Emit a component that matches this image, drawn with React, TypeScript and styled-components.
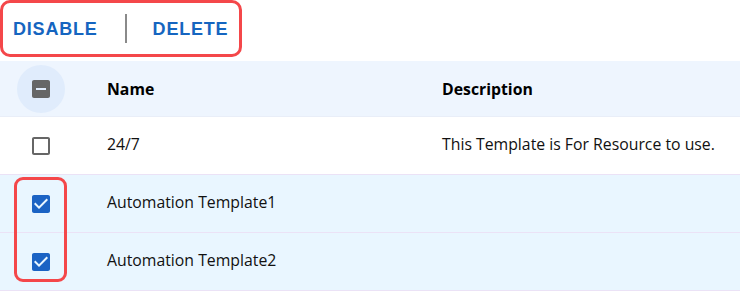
import React from "react";
import styled, { createGlobalStyle } from "styled-components";

const Global = createGlobalStyle`
  html, body { margin: 0; padding: 0; background: #ffffff; }
  body { font-family: "Open Sans", "Noto Sans", sans-serif; color: #111; }
`;

const Page = styled.div`
  width: 740px;
  display: flex;
  flex-direction: column;
  gap: 4px;
`;

const Toolbar = styled.div`
  align-self: flex-start;
  display: flex;
  align-items: center;
  box-sizing: border-box;
  height: 57px;
  padding: 0 11px 0 10px;
  border: 3px solid #f4474a;
  border-radius: 10px;
  gap: 26px;
`;

const ActionButton = styled.button`
  border: 0;
  background: none;
  padding: 2px 0 0;
  margin: 0;
  font-family: "Liberation Sans", Arial, sans-serif;
  font-weight: 700;
  font-size: 18px;
  letter-spacing: 0.8px;
  color: #1565c0;
  text-transform: uppercase;
  cursor: pointer;
`;

const Divider = styled.span`
  width: 2px;
  height: 29px;
  background: #8a8a8a;
  margin-left: 1px;
`;

const Table = styled.div`
  display: flex;
  flex-direction: column;
`;

const Row = styled.div<{ $variant: "head" | "plain" | "selected" }>`
  display: grid;
  grid-template-columns: 91px 335px 1fr;
  align-items: center;
  box-sizing: border-box;
  height: ${(p) => (p.$variant === "head" ? "56px" : "58px")};
  background: ${(p) =>
    p.$variant === "head" ? "#eef5fe" : p.$variant === "selected" ? "#e9f6ff" : "#ffffff"};
  border-bottom: 1px solid ${(p) => (p.$variant === "head" ? "#e9eef8" : "#ebe2f6")};
`;

const CheckCell = styled.div`
  padding-left: 17px;
  display: flex;
  align-items: center;
`;

const CheckHalo = styled.span<{ $active?: boolean }>`
  width: 48px;
  height: 48px;
  border-radius: 50%;
  display: flex;
  align-items: center;
  justify-content: center;
  background: ${(p) => (p.$active ? "#e0ecfc" : "transparent")};
`;

const Cell = styled.div<{ $head?: boolean; $lift?: boolean }>`
  padding-left: 16px;
  padding-bottom: ${(p) => (p.$lift ? "4px" : "0")};
  font-size: 15.8px;
  font-weight: ${(p) => (p.$head ? 700 : 400)};
  color: ${(p) => (p.$head ? "#000" : "#111")};
  white-space: nowrap;
`;

const SelectedGroup = styled.div`
  position: relative;
  display: flex;
  flex-direction: column;
`;

const Highlight = styled.div`
  position: absolute;
  left: 14px;
  top: 2px;
  width: 53px;
  height: 105px;
  box-sizing: border-box;
  border: 3px solid #f4474a;
  border-radius: 9px;
  pointer-events: none;
`;

type BoxState = "checked" | "unchecked" | "indeterminate";

const BoxIcon = ({ state }: { state: BoxState }) => {
  const paths: Record<BoxState, string> = {
    checked:
      "M19 3H5c-1.11 0-2 .9-2 2v14c0 1.1.89 2 2 2h14c1.11 0 2-.9 2-2V5c0-1.1-.89-2-2-2zm-9 14l-5-5 1.41-1.41L10 14.17l7.59-7.59L19 8l-9 9z",
    unchecked:
      "M19 5v14H5V5h14m0-2H5c-1.1 0-2 .9-2 2v14c0 1.1.9 2 2 2h14c1.1 0 2-.9 2-2V5c0-1.1-.9-2-2-2z",
    indeterminate:
      "M19 3H5c-1.1 0-2 .9-2 2v14c0 1.1.9 2 2 2h14c1.1 0 2-.9 2-2V5c0-1.1-.9-2-2-2zm-2 10H7v-2h10v2z",
  };
  const color = state === "checked" ? "#1b63c4" : "#666666";
  return (
    <svg width="24" height="24" viewBox="0 0 24 24" aria-hidden="true">
      <path d={paths[state]} fill={color} />
    </svg>
  );
};

const rows = [
  { name: "Automation Template1", desc: "" },
  { name: "Automation Template2", desc: "" },
];

export default function App() {
  return (
    <>
      <Global />
      <Page>
        <Toolbar>
          <ActionButton>Disable</ActionButton>
          <Divider />
          <ActionButton>Delete</ActionButton>
        </Toolbar>
        <Table>
          <Row $variant="head">
            <CheckCell>
              <CheckHalo $active>
                <BoxIcon state="indeterminate" />
              </CheckHalo>
            </CheckCell>
            <Cell $head>Name</Cell>
            <Cell $head>Description</Cell>
          </Row>
          <Row $variant="plain">
            <CheckCell>
              <CheckHalo>
                <BoxIcon state="unchecked" />
              </CheckHalo>
            </CheckCell>
            <Cell $lift>24/7</Cell>
            <Cell $lift>This Template is For Resource to use.</Cell>
          </Row>
          <SelectedGroup>
            {rows.map((r) => (
              <Row $variant="selected" key={r.name}>
                <CheckCell>
                  <CheckHalo>
                    <BoxIcon state="checked" />
                  </CheckHalo>
                </CheckCell>
                <Cell $lift>{r.name}</Cell>
                <Cell $lift>{r.desc}</Cell>
              </Row>
            ))}
            <Highlight />
          </SelectedGroup>
        </Table>
      </Page>
    </>
  );
}
